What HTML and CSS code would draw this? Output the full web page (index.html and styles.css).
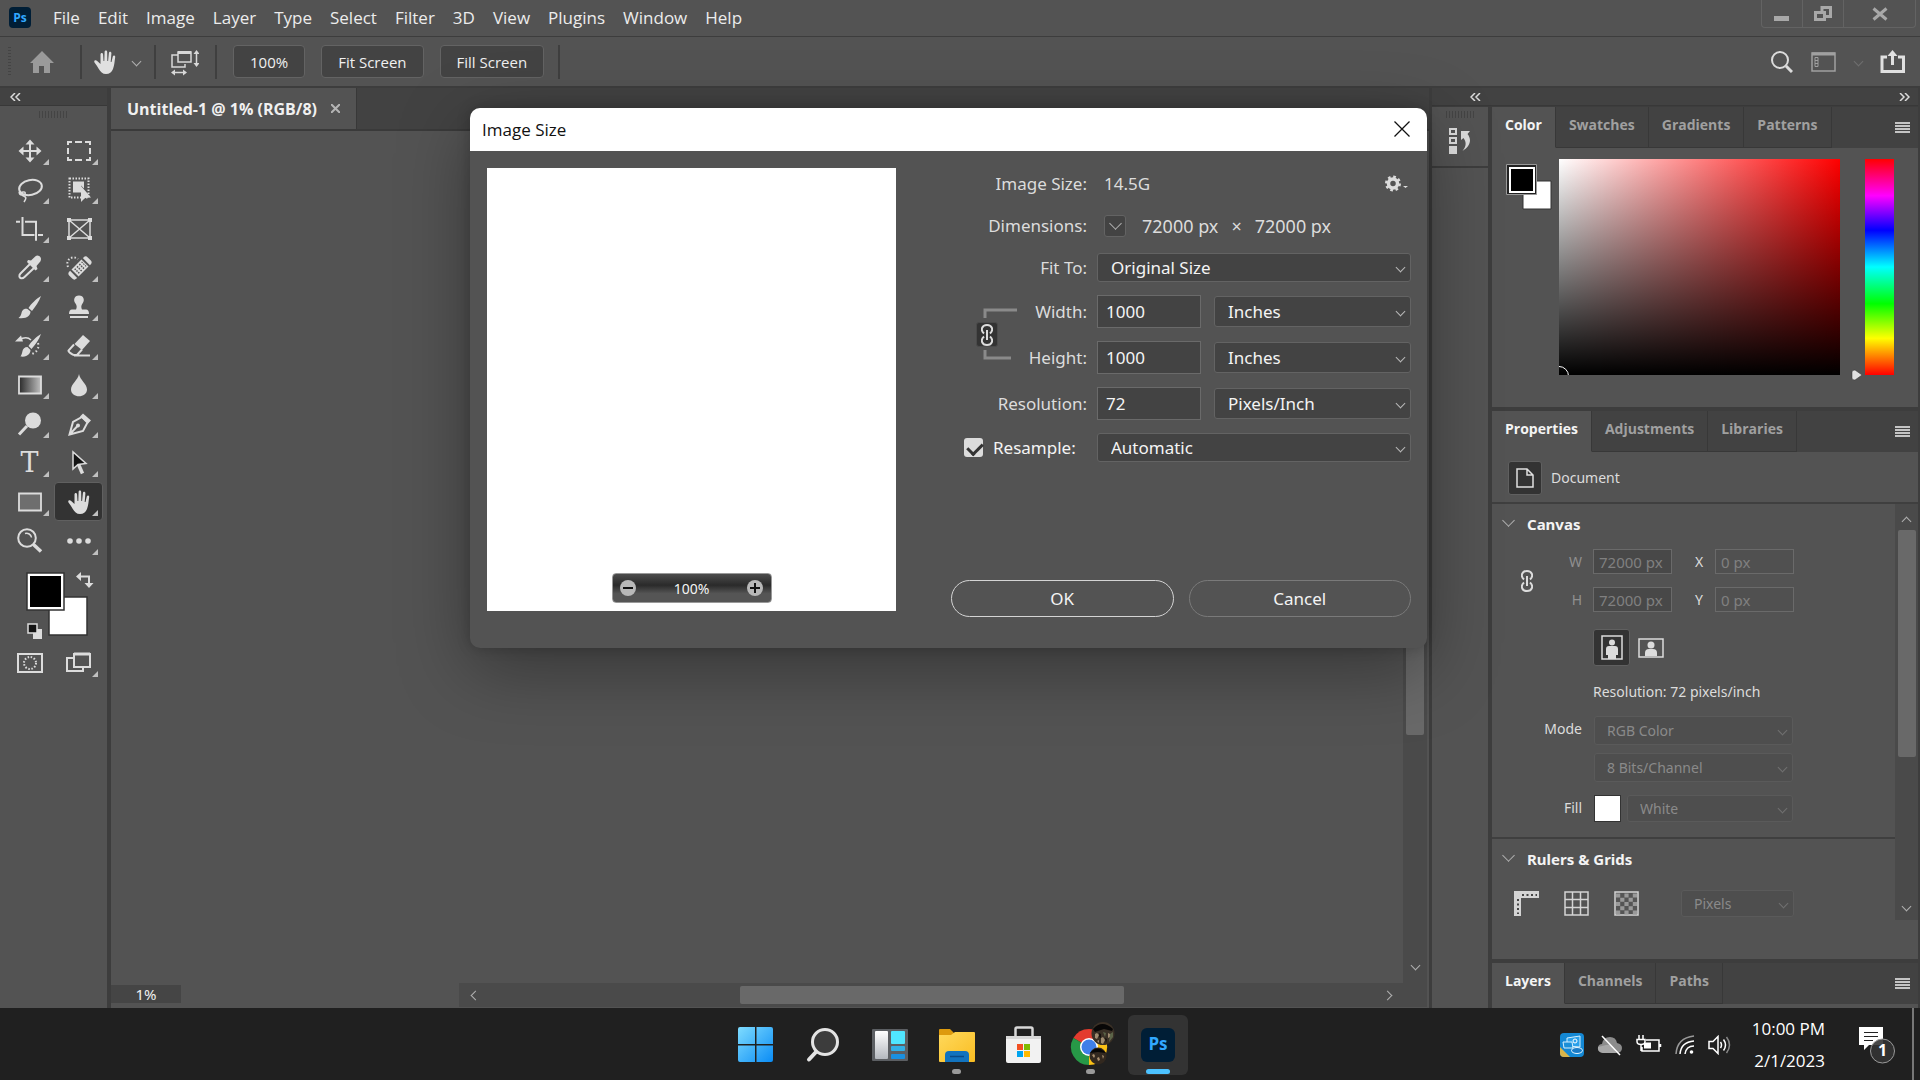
FILE: index.html
```html
<!DOCTYPE html>
<html lang="en">
<head>
    <meta charset="UTF-8">
    <meta name="viewport" content="width=device-width, initial-scale=1.0">
    <title>Untitled-1 @ 1% (RGB/8)</title>
    <link rel="stylesheet" href="styles.css">
</head>
<body>
    <!-- Menu bar -->
    <header class="menubar">
        <svg class="app-logo" width="22" height="21" viewBox="0 0 22 21"><rect width="22" height="21" rx="4" fill="#001e36"/><text x="11" y="15" text-anchor="middle" class="ps-small">Ps</text></svg>
        <nav class="menus">
            <button>File</button>
            <button>Edit</button>
            <button>Image</button>
            <button>Layer</button>
            <button>Type</button>
            <button>Select</button>
            <button>Filter</button>
            <button>3D</button>
            <button>View</button>
            <button>Plugins</button>
            <button>Window</button>
            <button>Help</button>
        </nav>
        <div class="window-buttons">
            <button aria-label="Minimize"><svg width="16" height="16"><path d="M0 10h15v5H0z" fill="#a8a8a8"/></svg></button>
            <button aria-label="Restore"><svg width="18" height="16" fill="none" stroke="#a8a8a8" stroke-width="3"><path d="M1.500 6.500h9v7h-9zM8 5V1.500h8.500v9H12"/></svg></button>
            <button aria-label="Close" class="wide"><svg width="16" height="14" stroke="#a8a8a8" stroke-width="3"><path d="M1.500 1.500l13 11M14.500 1.500l-13 11"/></svg></button>
        </div>
    </header>

    <!-- Tool options -->
    <div class="options">
        <span class="grip-v"></span>
        <button class="home" aria-label="Home"><svg width="26" height="24" fill="#9a9a9a"><path d="M13 1L1 13h3v10h6v-7h5v7h6V13h4z"/></svg></button>
        <span class="sep"></span>
        <button class="hand" aria-label="Hand tool">
            <svg width="22" height="24" viewBox="0 0 22 24"><use href="#i-hand"/></svg>
            <i class="chev"></i>
        </button>
        <span class="sep"></span>
        <button class="resize" aria-label="Scroll all windows">
            <svg width="28" height="26" fill="none" stroke="#d8d8d8" stroke-width="1.500"><path d="M7 5H1v12h13v-3M7 2h13v10H7z"/><path d="M7 2.500h13" stroke-width="3"/><path d="M25.500 3v11M3 22.500h10"/><path d="M25.500 0l3 4h-6zM25.500 17l3-4h-6zM0 22.500l4-3v6zM16 22.500l-4-3v6z" fill="#d8d8d8" stroke="none"/></svg>
        </button>
        <span class="sep"></span>
        <div class="zoom-buttons">
            <button class="opt-btn">100%</button>
            <button class="opt-btn">Fit Screen</button>
            <button class="opt-btn">Fill Screen</button>
        </div>
        <span class="sep"></span>
        <div class="options-right">
            <button aria-label="Search"><svg width="22" height="22" fill="none" stroke="#dcdcdc"><circle cx="9" cy="9" r="8" stroke-width="2"/><path d="M15 15l6 6" stroke-width="3"/></svg></button>
            <button aria-label="Workspace"><svg width="26" height="20" fill="none" stroke="#a0a0a0"><path d="M1 1h23v18H1z" stroke-width="1.500"/><path d="M1 2h23" stroke-width="3"/><path d="M4 5.500h3v9H4zM4 8.500h3M4 11.500h3"/></svg></button>
            <i class="chev dim"></i>
            <button aria-label="Share"><svg width="26" height="24" fill="none" stroke="#e0e0e0" stroke-width="3"><path d="M7 7H2v14.500h21.500V7H18M12.500 15V5"/><path d="M12.500 0l5 6h-10z" fill="#e0e0e0" stroke="none"/></svg></button>
        </div>
    </div>

    <main class="workspace">
        <!-- Toolbox -->
        <aside class="toolbox">
            <div class="strip"><svg width="11" height="8" class="dbl"><path d="M5 0L1 4l4 4M10 0L6 4l4 4"/></svg></div>
            <span class="grip"></span>
            <div class="tools">
                <button class="tool more" aria-label="Move"><svg viewBox="0 0 28 28"><path d="M14 5v18M5 14h18" class="ln"/><path d="M14 2.500l4.500 5h-9zM14 25.500l4.500-5h-9zM2.500 14l5-4.500v9zM25.500 14l-5-4.500v9z"/></svg></button>
                <button class="tool more" aria-label="Marquee"><svg viewBox="0 0 28 28"><path d="M3 8V5h4M10 5h7M20 5h5v3M25 11v6M25 20v3h-4M17 23h-7M7 23H3v-3M3 17v-6" class="ln"/></svg></button>
                <button class="tool more" aria-label="Lasso"><svg viewBox="0 0 28 28"><g class="ln"><ellipse cx="14.500" cy="11.500" rx="11.500" ry="7.500" transform="rotate(-12 14.500 11.500)"/><path d="M4 15c-2 2 0 4.500 3 4 3-.5 3-3.500 0-3s-3 3 .5 4 2.500 3 .5 6" stroke-width="1.500"/></g></svg></button>
                <button class="tool more" aria-label="Object selection"><svg viewBox="0 0 28 28"><path d="M4.500 2.500h19v19h-19z" class="ln" stroke-dasharray="1.500 1.500"/><path d="M8 5.500h11v7l-3-3v7H8z"/><path d="M16 10v16l4-4 6-.5z"/></svg></button>
                <button class="tool more" aria-label="Crop"><svg viewBox="0 0 28 28"><path d="M6.500 2v18h12M0 6.700h4M9 6.700h11v19M22 20h5" class="ln"/></svg></button>
                <button class="tool" aria-label="Frame"><svg viewBox="0 0 28 28"><path d="M4 5h21v18H4zM4 5l21 18M25 5L4 23" class="ln" stroke-width="1.500"/><path d="M2 3h4v4H2zM23 3h4v4h-4zM2 21h4v4H2zM23 21h4v4h-4z"/></svg></button>
                <button class="tool more" aria-label="Eyedropper"><svg viewBox="0 0 28 28"><path d="M14 10L4.500 19.500c-2 2-1 4 0 4.500 1 .5 2.500.5 4-1L18 14" class="ln"/><path d="M12 6l3 .5 4.500-4.300c3-2 7 1.500 5 5L20.500 12l1 3-2 1.500L11 8z"/></svg></button>
                <button class="tool more" aria-label="Healing brush"><svg viewBox="0 0 28 28"><path d="M3 13C0 5 8 1 13 5" class="ln" stroke-dasharray="1.500 2"/><g transform="rotate(-45 15 14)"><path d="M6 9h-1a3 3 0 0 0-3 3v4a3 3 0 0 0 3 3h1zM24 9h1a3 3 0 0 1 3 3v4a3 3 0 0 1-3 3h-1z"/><path d="M8 9h14v10H8z"/><path d="M10 11.500h11M10 14h11M10 16.500h11" stroke="#535353" stroke-width="1.500" stroke-dasharray="1.500 1.800"/></g></svg></button>
                <button class="tool more" aria-label="Brush"><svg viewBox="0 0 28 28"><path d="M25 3c-5 3-10 8-12.500 12l3.500 3c3-4 7-9 9-15zM11.500 16c-4-1-5.500 2-6 4-.4 2-1.500 4-3 5 4 .6 8 0 10-2 1.500-1.500 2-3 2-4.500z"/></svg></button>
                <button class="tool more" aria-label="Clone stamp"><svg viewBox="0 0 28 28"><path d="M14 2.500c-5 0-6 5-3.500 8 1.500 2 1.500 4 .5 6H7c-2 0-3 1.500-3 4.500h20c0-3-1-4.500-3-4.500h-4c-1-2-1-4 .5-6 2.500-3 1.500-8-3.500-8zM5 23h18v2H5z"/></svg></button>
                <button class="tool more" aria-label="History brush"><svg viewBox="0 0 28 28"><path d="M25 2c-5 3-10 8-12.500 12l3 3C19 13 23 8 25 2zM11.500 15c-3 0-4.500 2-5 4-.4 2-1 4-2 5.500 4 .6 6.500-.5 8-2 1.500-1.500 2-3 2-4.500z"/><path d="M3 8c5-3 9-3 12 0" class="ln" stroke-width="1.500"/><path d="M-1 9.500l6-6 2 6z"/><path d="M22 11c1.500 5-1 9-6 11" class="ln" stroke-dasharray="1.500 2.500"/></svg></button>
                <button class="tool more" aria-label="Eraser"><svg viewBox="0 0 28 28"><path d="M18 3l7 6-8 9-7.500-6z"/><path d="M9 12.500l-5.500 6c-.6 1 4 4.500 5.500 4.500h3l5-5.500M9 23.500h16" class="ln"/></svg></button>
                <button class="tool more" aria-label="Gradient"><svg viewBox="0 0 28 28"><defs><linearGradient id="grad"><stop offset="0" stop-color="#2a2a2a"/><stop offset="1" stop-color="#c0c0c0"/></linearGradient></defs><path d="M3 5.500h22v17H3z" fill="url(#grad)" stroke="#dcdcdc" stroke-width="1.800"/></svg></button>
                <button class="tool more" aria-label="Blur"><svg viewBox="0 0 28 28"><path d="M14 3c1 6 8 10 8 15.500 0 9-16 9-16 0C6 13 13 9 14 3z"/></svg></button>
                <button class="tool more" aria-label="Dodge"><svg viewBox="0 0 28 28"><circle cx="17" cy="10.500" r="8"/><path d="M11 16l-8 8.500" class="ln" stroke-width="3"/></svg></button>
                <button class="tool more" aria-label="Pen"><svg viewBox="0 0 28 28"><path d="M4.500 24.500L8 12l9-5 5.500 5.500L18 21zM4.500 24.500l8-8.500" class="ln"/><circle cx="13" cy="15.500" r="2"/><path d="M18 3.500l8 7-3 3-8-7z"/></svg></button>
                <button class="tool more" aria-label="Type"><span class="type-glyph">T</span></button>
                <button class="tool more" aria-label="Path selection"><svg viewBox="0 0 28 28"><path d="M8 3v17l5-4.500 8-1z" fill="#141414" stroke="#dcdcdc" stroke-width="1.500"/><path d="M13.500 15.500l4 9" class="ln" stroke-width="3.500"/></svg></button>
                <button class="tool more" aria-label="Rectangle"><svg viewBox="0 0 28 28"><path d="M3 5.500h22v17H3z" fill="#6e6e6e" stroke="#dcdcdc" stroke-width="1.800"/></svg></button>
                <button class="tool more active" aria-label="Hand"><svg viewBox="0 0 28 28"><g transform="translate(3 2)"><path id="i-hand" d="M6.500 14V4.500c0-2 2.500-2 2.600 0L9.500 11h.8L10.600 2c.1-1.900 2.500-1.900 2.600 0l.1 9h.8l.8-8c.2-1.800 2.500-1.700 2.500.2L16.700 12h.8l1.300-5.500c.5-1.800 2.600-1.300 2.400.6C20.500 12 20.500 15 19 19c-1.500 3.500-3.500 5-7 5s-5.500-2-7.500-5.500C3 16 2 14.500.5 12.500c-1-1.800 1-3 2.700-1.600z"/></g></svg></button>
                <button class="tool" aria-label="Zoom"><svg viewBox="0 0 28 28"><circle cx="11" cy="11" r="8.800" class="ln"/><path d="M9 6.500c3-1 6 1 6.500 4" class="ln" stroke-width="1.500"/><path d="M17.500 17.500l7.500 7" class="ln" stroke-width="3.500"/></svg></button>
                <button class="tool more" aria-label="Edit toolbar"><svg viewBox="0 0 28 28"><circle cx="5" cy="14" r="2.800"/><circle cx="14" cy="14" r="2.800"/><circle cx="23" cy="14" r="2.800"/></svg></button>
            </div>
            <button class="swatches" aria-label="Foreground and background colors">
                <svg width="68" height="70" viewBox="0 0 68 70">
                    <path d="M23 25h38v38H23z" fill="#fff" stroke="#333" stroke-width="1.500"/>
                    <path d="M1 1h37v37H1z" fill="#fff" stroke="#333" stroke-width="1.500"/>
                    <path d="M4 4h31v31H4z" fill="#000"/>
                    <path d="M54 4.500h9V12" fill="none" stroke="#dcdcdc" stroke-width="2"/>
                    <path d="M50 4.500l5-4.500v9zM63 16l-4.500-5h9z" fill="#dcdcdc"/>
                    <path d="M7 57h9v10H7z" fill="#dcdcdc"/>
                    <path d="M2 52h9v9H2z" fill="#141414" stroke="#dcdcdc" stroke-width="1.500"/>
                </svg>
            </button>
            <div class="tools modes">
                <button class="tool" aria-label="Quick mask"><svg viewBox="0 0 28 28"><path d="M2 5h24v18H2z" class="ln"/><circle cx="14" cy="14" r="6" class="ln" stroke-dasharray="1.500 1.640"/></svg></button>
                <button class="tool more" aria-label="Screen mode"><svg viewBox="0 0 28 28"><path d="M8 9H2v13h16v-4" class="ln"/><path d="M9 5h16v13H9z" class="ln"/><path d="M9 5h16" class="ln" stroke-width="3"/></svg></button>
            </div>
        </aside>

        <!-- Document window -->
        <section class="document">
            <div class="doc-tabs">
                <div class="doc-tab">
                    <span>Untitled-1 @ 1% (RGB/8)</span>
                    <button aria-label="Close document"><svg width="9" height="9" stroke="#b4b4b4" stroke-width="2"><path d="M0 0l9 9M9 0L0 9"/></svg></button>
                </div>
            </div>
            <div class="canvas-area">
                <div class="canvas"></div>
                <div class="vscroll"><span class="thumb"></span><i class="chev"></i></div>
            </div>
            <div class="statusbar">
                <input class="zoom-field" type="text" value="1%" aria-label="Zoom level">
                <div class="hscroll"><i class="chev left"></i><span class="thumb"></span><i class="chev right"></i></div>
            </div>
        </section>

        <!-- Panels -->
        <div class="docks">
            <div class="strip"><svg width="11" height="8" class="dbl"><path d="M5 0L1 4l4 4M10 0L6 4l4 4"/></svg><svg width="11" height="8" class="dbl"><path d="M1 0l4 4-4 4M6 0l4 4-4 4"/></svg></div>
            <div class="dock-row">
                <aside class="icon-dock">
                    <span class="grip"></span>
                    <button aria-label="History"><svg width="24" height="28" fill="none" stroke="#dcdcdc" stroke-width="2"><path d="M2 2h6v5H2zM2 11h6v5H2z"/><path d="M1 19h8v8H1z" fill="#dcdcdc" stroke="none"/><path d="M13 4h9l-2.500 3c5 6 2 13-5 17 4-5 4-9 1-13l-2.500 2z" fill="#dcdcdc" stroke="none"/></svg></button>
                </aside>
                <aside class="panels">
                    <section class="panel">
                        <div class="tabs">
                            <button class="tab on">Color</button>
                            <button class="tab">Swatches</button>
                            <button class="tab">Gradients</button>
                            <button class="tab">Patterns</button>
                            <button class="burger" aria-label="Panel menu"></button>
                        </div>
                        <div class="color-body">
                            <svg width="46" height="47" viewBox="0 0 46 47"><path d="M17 17h28v28H17z" fill="#fff" stroke="#333"/><path d="M.5.5h30v30H.5z" fill="#222" stroke="#999"/><path d="M3 3h26v26H3z" fill="#fff"/><path d="M5 5h22v22H5z" fill="#000"/></svg>
                            <div class="color-field"><span class="picker"></span></div>
                            <div class="hue"><svg class="hue-mark" width="12" height="12"><path d="M1 3q0-2 3-2l7 5-7 5q-3 0-3-2z" fill="#e0e0e0" stroke="#333" stroke-width=".5"/></svg></div>
                        </div>
                    </section>

                    <section class="panel props">
                        <div class="tabs">
                            <button class="tab on">Properties</button>
                            <button class="tab">Adjustments</button>
                            <button class="tab">Libraries</button>
                            <button class="burger" aria-label="Panel menu"></button>
                        </div>
                        <div class="doc-row">
                            <span class="pressed"><svg width="18" height="20" fill="none" stroke="#e0e0e0" stroke-width="1.500"><path d="M1 1h10l6 6v12H1zM11 1v6h6"/></svg></span>
                            Document
                        </div>
                        <div class="props-scroll">
                            <div class="props-body">
                                <h2><i class="chev big"></i>Canvas</h2>
                                <div class="fields">
                                    <svg class="chain" width="12" height="22" viewBox="0 0 12 22"><use href="#i-chain"/></svg>
                                    <label class="off" for="cw">W</label>
                                    <div class="pair"><input id="cw" type="text" value="72000 px" disabled><label for="cx">X</label><input id="cx" class="flat" type="text" value="0 px" disabled></div>
                                    <label class="off" for="ch">H</label>
                                    <div class="pair"><input id="ch" type="text" value="72000 px" disabled><label for="cy">Y</label><input id="cy" class="flat" type="text" value="0 px" disabled></div>
                                </div>
                                <div class="orient">
                                    <button class="pressed" aria-label="Portrait"><svg width="22" height="26" fill="#dcdcdc"><path d="M1 1h20v23H1z" fill="none" stroke="#dcdcdc" stroke-width="1.500"/><circle cx="11" cy="7.500" r="3"/><path d="M5 14q0-3 3-3h6q3 0 3 3v6h-2v4H7v-4H5z"/></svg></button>
                                    <button aria-label="Landscape"><svg width="26" height="20" fill="#dcdcdc"><path d="M1 1h24v18H1z" fill="none" stroke="#dcdcdc" stroke-width="1.500"/><circle cx="13" cy="7" r="3.500"/><path d="M7 18v-3q0-4 4-4h4q4 0 4 4v3z"/></svg></button>
                                </div>
                                <p class="res">Resolution: 72 pixels/inch</p>
                                <div class="modes-grid">
                                    <label for="mode">Mode</label>
                                    <span class="select off"><select id="mode" disabled><option>RGB Color</option></select></span>
                                    <span class="select off second"><select aria-label="Bit depth" disabled><option>8 Bits/Channel</option></select></span>
                                    <label for="fill">Fill</label>
                                    <div class="fill-row"><span class="fill-color"></span><span class="select off"><select id="fill" disabled><option>White</option></select></span></div>
                                </div>
                                <div class="rulers">
                                    <h2><i class="chev big"></i>Rulers &amp; Grids</h2>
                                    <div class="ruler-row">
                                        <button aria-label="Rulers"><svg width="25" height="25"><path d="M0 0h25v7H7v18H0z" fill="#d4d4d4"/><path d="M8 4h15M4 8v15" stroke="#444" stroke-width="2" stroke-dasharray="2 2.500"/></svg></button>
                                        <button aria-label="Grid"><svg width="25" height="25" fill="none" stroke="#d4d4d4" stroke-width="1.500"><path d="M1 1h23v23H1zM1 8.500h23M1 16.500h23M8.500 1v23M16.500 1v23"/></svg></button>
                                        <button aria-label="Transparency"><svg width="25" height="25"><path d="M1 1h23v23H1z" fill="#555" stroke="#d4d4d4" stroke-width="1.500"/><path d="M2 4.500h21M2 13h21M2 21.500h21" stroke="#999" stroke-width="4" stroke-dasharray="4.200 4.200"/><path d="M6.200 8.800h17M6.200 17.200h17" stroke="#999" stroke-width="4" stroke-dasharray="4.200 4.200"/></svg></button>
                                        <span class="select off"><select aria-label="Ruler units" disabled><option>Pixels</option></select></span>
                                    </div>
                                </div>
                            </div>
                            <div class="pscroll"><i class="chev up"></i><span class="thumb"></span><i class="chev"></i></div>
                        </div>
                    </section>

                    <section class="panel collapsed">
                        <div class="tabs">
                            <button class="tab on">Layers</button>
                            <button class="tab">Channels</button>
                            <button class="tab">Paths</button>
                            <button class="burger" aria-label="Panel menu"></button>
                        </div>
                    </section>
                </aside>
            </div>
        </div>
    </main>

    <!-- Image Size dialog -->
    <form class="dialog" role="dialog" aria-labelledby="dlg-title">
        <div class="dlg-title">
            <span id="dlg-title">Image Size</span>
            <button type="button" aria-label="Close"><svg width="16" height="16" stroke="#111" stroke-width="1.300"><path d="M.5.5l15 15M15.500.5l-15 15"/></svg></button>
        </div>
        <div class="dlg-body">
            <div class="preview">
                <div class="preview-zoom">
                    <button type="button" aria-label="Zoom out"><svg width="16" height="16"><circle cx="8" cy="8" r="8" fill="#b8b8b8"/><path d="M3 8h10" stroke="#111" stroke-width="2"/></svg></button>
                    <span>100%</span>
                    <button type="button" aria-label="Zoom in"><svg width="16" height="16"><circle cx="8" cy="8" r="8" fill="#b8b8b8"/><path d="M3 8h10M8 3v10" stroke="#111" stroke-width="2"/></svg></button>
                </div>
            </div>
            <div class="settings">
                <div class="row info">
                    <span class="lbl">Image Size:</span>
                    <span class="val">14.5G</span>
                    <button type="button" class="gear" aria-label="Settings"><svg width="26" height="18" viewBox="0 0 26 18"><circle cx="8" cy="8.500" r="4.500" fill="none" stroke="#dcdcdc" stroke-width="3.500"/><circle cx="8" cy="8.500" r="6.800" fill="none" stroke="#dcdcdc" stroke-width="2.400" stroke-dasharray="2.670 2.670"/><path d="M18 11h5l-2.500 2z" fill="#dcdcdc"/></svg></button>
                </div>
                <div class="row info">
                    <span class="lbl">Dimensions:</span>
                    <button type="button" class="dim-btn" aria-label="Dimension units"><i class="chev big"></i></button>
                    <span class="dims"><span>72000 px</span><span>×</span><span>72000 px</span></span>
                </div>
                <div class="row fit">
                    <label class="lbl" for="fit">Fit To:</label>
                    <span class="select"><select id="fit"><option>Original Size</option></select></span>
                </div>
                <div class="linked">
                    <svg class="link-lines" width="42" height="54" viewBox="0 0 42 54" fill="none" stroke="#8a8a8a" stroke-width="3"><path d="M9 10V2h32M9 42v8h26"/></svg>
                    <button type="button" class="link-btn" aria-label="Constrain aspect ratio"><svg width="12" height="22" viewBox="0 0 12 22"><g id="i-chain" fill="none" stroke="#dcdcdc" stroke-width="2"><path d="M3 9.500C-1 6 1 1 6 1s7 5 3 8.500M3 12.500C-1 16 1 21 6 21s7-5 3-8.500M6 6v10"/></g></svg></button>
                    <div class="row">
                        <label class="lbl" for="w">Width:</label>
                        <input id="w" type="text" value="1000">
                        <span class="select"><select aria-label="Width units"><option>Inches</option></select></span>
                    </div>
                    <div class="row">
                        <label class="lbl" for="h">Height:</label>
                        <input id="h" type="text" value="1000">
                        <span class="select"><select aria-label="Height units"><option>Inches</option></select></span>
                    </div>
                </div>
                <div class="row">
                    <label class="lbl" for="r">Resolution:</label>
                    <input id="r" type="text" value="72">
                    <span class="select"><select aria-label="Resolution units"><option>Pixels/Inch</option></select></span>
                </div>
                <div class="row fit">
                    <label class="lbl check"><input type="checkbox" checked>Resample:</label>
                    <span class="select"><select aria-label="Resample method"><option>Automatic</option></select></span>
                </div>
                <div class="actions">
                    <button type="button" class="pill ok">OK</button>
                    <button type="button" class="pill">Cancel</button>
                </div>
            </div>
        </div>
    </form>

    <!-- Taskbar -->
    <footer class="taskbar">
        <div class="apps">
            <button aria-label="Start"><svg width="36" height="36"><defs><linearGradient id="win" x1="0" y1="0" x2="1" y2="1"><stop offset="0" stop-color="#7fdcff"/><stop offset="1" stop-color="#0a8cf5"/></linearGradient></defs><path d="M2 0h15v17H0V2q0-2 2-2zM18.500 0H33q2 0 2 2v15H18.500zM0 18.500h17V35H2q-2 0-2-2zM18.500 18.500H35V33q0 2-2 2H18.500z" fill="url(#win)"/></svg></button>
            <button aria-label="Search"><svg width="34" height="36" fill="none" stroke="#e4e4e4"><path d="M10 25l-7 7.500" stroke-width="4" stroke-linecap="round"/><circle cx="19" cy="15" r="12.500" fill="#3c3c3c" stroke-width="3"/></svg></button>
            <button aria-label="Widgets"><svg width="36" height="34"><defs><linearGradient id="wd" x1="0" y1="0" x2="0" y2="1"><stop offset="0" stop-color="#fff"/><stop offset="1" stop-color="#b4b8be"/></linearGradient></defs><rect y="1" width="36" height="32" rx="1" fill="#5c5f63"/><rect x="3" y="3" width="13" height="28" rx="1" fill="url(#wd)"/><rect x="19" y="3" width="14" height="13" rx="1" fill="#50e6ff"/><rect x="19" y="18" width="14" height="5" rx="1" fill="#32b0e6"/><rect x="19" y="26" width="14" height="5" rx="1" fill="#1a90e0"/></svg></button>
            <button aria-label="File Explorer" class="running"><svg width="38" height="36"><defs><linearGradient id="fe" x1="0" y1="0" x2="1" y2="1"><stop offset="0" stop-color="#ffd95c"/><stop offset="1" stop-color="#f9bd22"/></linearGradient></defs><path d="M1 3q0-1 1-1h10l4 4v6H1z" fill="#dd9a0e"/><path d="M1 8h12l4-3h19q1 0 1 1v28q0 1-1 1H2q-1 0-1-1z" fill="url(#fe)"/><path d="M7 35V28q0-4 4-4h16q4 0 4 4v7z" fill="#1273be"/><path d="M12 29.500h14" stroke="#0b4a85" stroke-width="1.500"/></svg></button>
            <button aria-label="Microsoft Store"><svg width="36" height="38"><path d="M0 10h35v25q0 2-2 2H2q-2 0-2-2z" fill="#f2f2f2"/><path d="M0 10h35v3H0z" fill="#d8d8d8"/><path d="M9.500 13V3q0-1.500 1.500-1.500h14q1.500 0 1.500 1.500v10" fill="none" stroke="#d8d8d8" stroke-width="2.500"/><path d="M11 18h6v6h-6z" fill="#f25022"/><path d="M18 18h6v6h-6z" fill="#7fba00"/><path d="M11 25h6v6h-6z" fill="#00a4ef"/><path d="M18 25h6v6h-6z" fill="#ffb900"/></svg></button>
            <button aria-label="Chrome" class="running chrome"><svg width="46" height="44" viewBox="0 0 46 44">
                <path d="M19 26L3.400 17A18 18 0 0 1 34.600 17z" fill="#e33b2e"/><path d="M19 26l15.600-9A18 18 0 0 1 19 44z" fill="#fbc116"/><path d="M19 26v18A18 18 0 0 1 3.400 17z" fill="#279847"/>
                <circle cx="19" cy="26" r="9" fill="#fff"/><circle cx="19" cy="26" r="7.500" fill="#3f7fe8"/>
                <circle cx="33" cy="12.500" r="11.500" fill="#3a3026"/><path d="M23 8q9-10 20 0l-1 2-8-2-9 3z" fill="#080707"/><path d="M25 13l2-1 2 2-2 4-2-1zM38 12l2 1v3l-2 1zM31 17l2-1 2 3-2 4-2-1zM27 20l2-1v3z" fill="#a08c70"/><path d="M40 13l3-2v5l-4 5zM33 11l3 1-1 4z" fill="#5c6448"/><path d="M29 12l2 1v4l-2-1zM35 17l2 1-1 4z" fill="#15100c"/>
                <circle cx="28" cy="35" r="8.500" fill="#32281f"/><path d="M20 32q7-9 16 0l-8-1z" fill="#060606"/><path d="M22 34l2-1 1 2-1 2zM27 37l2-1 1 3-2 1zM32 34l2 1-1 3z" fill="#ab9070"/></svg></button>
            <button aria-label="Photoshop" class="current"><svg width="34" height="34"><rect width="34" height="34" rx="6" fill="#001e36"/><text x="17" y="22" text-anchor="middle" class="ps-big">Ps</text></svg></button>
        </div>
        <div class="tray">
            <svg width="24" height="24" viewBox="0 0 24 24"><rect width="24" height="24" rx="4" fill="#1488d4"/><path d="M0 14l10 10H4q-4 0-4-4z" fill="#d8b44a"/><path d="M7 5l13-2v11L7 13z" fill="#2aa0ea" stroke="#d4f0ff"/><path d="M3 9h9l1 6H4z" fill="#1b8fd8" stroke="#d4f0ff"/><circle cx="15" cy="8" r="2" fill="none" stroke="#fff"/><ellipse cx="17" cy="17.500" rx="5.500" ry="3" fill="#1a7cc8" stroke="#e8f8ff"/></svg>
            <svg width="26" height="22" viewBox="0 0 26 22"><path d="M6 19q-6-1-5-6 1-3 4-3 1-7 8-7 6 0 7 6 5 1 5 5 0 5-6 5z" fill="#8c8c8c"/><path d="M9 11q7-2 10 8H6q-6-1-5-6z" fill="#a8a8a8"/><path d="M5 2l18 19" stroke="#fff" stroke-width="1.500"/></svg>
            <svg width="26" height="20" viewBox="0 0 26 20" fill="none" stroke="#fff" stroke-width="1.500"><path d="M6 12v4h17V5H10M24.500 9v3M3 0v4M7 0v4M1 4.500h8v2q0 3-4 3t-4-3zM5 9v7"/><path d="M8 7.500h7v6H8z" fill="#fff" stroke="none"/></svg>
            <svg width="20" height="20" viewBox="0 0 20 20" fill="none" stroke="#fff" stroke-width="1.500"><path d="M1 19Q2 3 19 1" stroke="#999"/><path d="M5 19Q6 7 19 6M10 19q1-8 9-8"/><circle cx="16.500" cy="17" r="1.800" fill="#fff" stroke="none"/></svg>
            <svg width="24" height="20" viewBox="0 0 24 20" fill="none" stroke="#fff" stroke-width="1.500"><path d="M1 6.500h4l5-5v17l-5-5H1zM12.500 7q2 3 0 6M15.500 4.500q4 5.500 0 11"/><path d="M18.500 2q6 8 0 16" stroke="#888"/></svg>
            <div class="clock"><span>10:00 PM</span><span>2/1/2023</span></div>
            <button class="notify" aria-label="1 notification"><svg width="38" height="38"><path d="M1 1h24v18H11l-5 5v-5H1z" fill="#fff"/><path d="M6 6.500h14M6 10.500h14M6 14.500h9" stroke="#222" stroke-width="1.200"/><circle cx="24.500" cy="25" r="12" fill="#333" fill-opacity=".9" stroke="#999"/></svg><b>1</b></button>
        </div>
    </footer>
</body>
</html>
```
FILE: styles.css
```css
* {
    box-sizing: border-box;
}

body {
    margin: 0;
    height: 100vh;
    display: flex;
    flex-direction: column;
    overflow: hidden;
    position: relative;
    background-color: #535353;
    color: #dcdcdc;
    font-family: "Noto Sans", sans-serif;
    font-size: 14px;
}

button {
    background: none;
    border: none;
    padding: 0;
    margin: 0;
    color: inherit;
    font: inherit;
}

svg {
    display: block;
    flex-shrink: 0;
}

input,
select {
    font: inherit;
    color: inherit;
    margin: 0;
    padding: 0;
}

/* Chevrons and grips */
.chev {
    display: block;
    flex-shrink: 0;
    width: 7px;
    height: 7px;
    border-right: 1px solid #b0b0b0;
    border-bottom: 1px solid #b0b0b0;
    transform: rotate(45deg);
}

.chev.big {
    width: 9px;
    height: 9px;
}

.chev.dim { opacity: 0.3; }
.chev.up { transform: rotate(225deg); }
.chev.left { transform: rotate(135deg); }
.chev.right { transform: rotate(-45deg); }

.grip {
    display: block;
    width: 29px;
    height: 7px;
    background: repeating-linear-gradient(90deg, #444 0 1px, transparent 1px 3px);
}

.grip-v {
    width: 3px;
    height: 29px;
    background: repeating-linear-gradient(#444 0 1px, transparent 1px 3px);
}

.dbl {
    fill: none;
    stroke: #dcdcdc;
    stroke-width: 1.5;
}

/* Menu bar */
.menubar {
    display: flex;
    align-items: center;
    height: 37px;
    padding: 0 4px 1px 9px;
    border-bottom: 1px solid #3d3d3d;
}

.menus {
    display: flex;
    gap: 18px;
    margin-left: 22px;
    padding-bottom: 1px;
    font: 17px "Open Sans", sans-serif;
    color: #ececec;
}

.ps-small,
.ps-big {
    font: bold 12px "Open Sans", sans-serif;
    fill: #31a8ff;
}

.ps-big {
    font-size: 17px;
}

.window-buttons {
    display: flex;
    align-self: flex-start;
    margin-left: auto;
    height: 28px;
    border: 1px solid #636363;
    border-top: none;
    border-radius: 0 0 4px 4px;
}

.window-buttons button {
    width: 41px;
    display: flex;
    align-items: center;
    justify-content: center;
    border-right: 1px solid #636363;
}

.window-buttons .wide {
    width: 71px;
    border-right: none;
}

/* Options bar */
.options {
    display: flex;
    align-items: center;
    height: 51px;
    padding: 0 14px 0 8px;
    border-bottom: 2px solid #3d3d3d;
}

.options .sep {
    width: 2px;
    height: 34px;
    background-color: #3f3f3f;
}

.home {
    margin: 0 25px 0 18px;
}

.hand {
    display: flex;
    align-items: center;
    gap: 17px;
    padding: 0 14px 0 12px;
    fill: #e0e0e0;
}

.resize {
    padding: 2px 16px 0 15px;
}

.zoom-buttons {
    display: flex;
    gap: 16px;
    margin: 0 14px 0 16px;
}

.opt-btn {
    height: 33px;
    padding: 0 16px;
    border: 1px solid #636363;
    border-radius: 4px;
    background-color: #434343;
    color: #f0f0f0;
    font: 15px "Open Sans", sans-serif;
}

.options-right {
    display: flex;
    align-items: center;
    gap: 18px;
    margin-left: auto;
}

/* Workspace */
.workspace {
    flex: 1;
    min-height: 0;
    display: flex;
    background-color: #3d3d3d;
    gap: 3px;
}

.strip {
    display: flex;
    align-items: center;
    justify-content: space-between;
    height: 18px;
    padding: 0 10px;
    background-color: #424242;
    border-bottom: 1px solid #383838;
}

.toolbox {
    width: 108px;
    background-color: #535353;
    border-right: 1px solid #3d3d3d;
}

.toolbox .grip {
    margin: 5px 0 13px 39px;
}

.tools {
    display: grid;
    grid-template-columns: 49px 49px;
    grid-auto-rows: 39px;
    padding-left: 5px;
    fill: #dcdcdc;
}

.tool {
    position: relative;
    display: flex;
    align-items: center;
    justify-content: center;
    border: 1px solid transparent;
    border-radius: 4px;
}

.tool svg {
    width: 28px;
    height: 28px;
    overflow: visible;
}

.ln {
    fill: none;
    stroke: #dcdcdc;
}

.ln:not([stroke-width]) {
    stroke-width: 2;
}

.tool.more::after {
    content: "";
    position: absolute;
    right: 4px;
    bottom: 4px;
    border: 3px solid;
    border-color: transparent #c0c0c0 #c0c0c0 transparent;
}

.tool.active {
    background-color: #333;
    border-color: #606060;
}

.type-glyph {
    font: 27px/28px "DejaVu Serif", serif;
    color: #dcdcdc;
}

.swatches {
    display: block;
    margin: 12px 0 1px 26px;
}

/* Document */
.document {
    flex: 1;
    min-width: 0;
    display: flex;
    flex-direction: column;
    padding-right: 2px;
    background-color: #535353;
}

.doc-tabs {
    display: flex;
    height: 43px;
    margin-right: -2px;
    background-color: #424242;
    border-bottom: 2px solid #3a3a3a;
}

.doc-tab {
    display: flex;
    align-items: center;
    gap: 14px;
    padding: 0 16px;
    background-color: #535353;
    border-right: 1px solid #383838;
    font: bold 16px "Open Sans", sans-serif;
    color: #f0f0f0;
}

.canvas-area {
    flex: 1;
    display: flex;
}

.canvas {
    flex: 1;
}

.vscroll {
    width: 24px;
    background-color: #4a4a4a;
    display: flex;
    flex-direction: column;
    align-items: center;
    justify-content: space-between;
    padding: 300px 0 14px;
}

.thumb {
    display: block;
    background-color: #696969;
    border-radius: 2px;
}

.vscroll .thumb {
    width: 18px;
    height: 304px;
}

.statusbar {
    display: flex;
    align-items: flex-start;
    height: 25px;
}

.zoom-field {
    width: 70px;
    height: 18px;
    margin-top: 2px;
    border: none;
    background-color: #454545;
    text-align: center;
    color: #f0f0f0;
    font-size: 15px;
}

.hscroll {
    flex: 1;
    height: 24px;
    margin-left: 278px;
    display: flex;
    align-items: center;
    justify-content: space-between;
    padding: 0 36px 0 13px;
    background-color: #4a4a4a;
}

.hscroll .thumb {
    width: 384px;
    height: 18px;
}

/* Docks */
.docks {
    width: 488px;
    display: flex;
    flex-direction: column;
    border-right: 2px solid #3d3d3d;
}

.docks .strip {
    padding: 0 8px 0 38px;
}

.dock-row {
    flex: 1;
    display: flex;
    gap: 4px;
    padding-top: 1px;
}

.icon-dock {
    width: 56px;
    background: #535353;
}

.icon-dock .grip {
    margin: 4px 0 9px 14px;
}

.icon-dock button {
    width: 56px;
    padding: 0 0 11px 16px;
    border-bottom: 2px solid #3d3d3d;
}

.panels {
    flex: 1;
    display: flex;
    flex-direction: column;
    gap: 4px;
}

.panel {
    background-color: #535353;
}

.panel.collapsed {
    padding-bottom: 4px;
}

.tabs {
    display: flex;
    height: 41px;
    background-color: #424242;
    font: bold 14px "Open Sans", sans-serif;
}

.tab {
    padding: 0 13px 5px;
    border-right: 1px solid #383838;
    border-bottom: 1px solid #383838;
    color: #a0a0a0;
}

.tab.on {
    background-color: #535353;
    border-bottom-color: #535353;
    color: #f4f4f4;
}

.burger {
    width: 15px;
    height: 11px;
    margin: 15px 8px 0 auto;
    background: repeating-linear-gradient(#c4c4c4 0 2px, transparent 2px 3px);
}

/* Color panel */
.color-body {
    display: flex;
    padding: 11px 24px 32px 14px;
}

.color-body > svg {
    margin-top: 5px;
}

.color-field {
    position: relative;
    flex: 1;
    height: 216px;
    margin: 0 25px 0 7px;
    overflow: hidden;
    background: linear-gradient(transparent, #000), linear-gradient(90deg, #fff, #f00);
}

/* current colour sits in the bottom left corner */
.picker {
    position: absolute;
    left: -10px;
    bottom: -11px;
    width: 20px;
    height: 20px;
    border: 1px solid #fff;
    border-radius: 50%;
}

.hue {
    position: relative;
    width: 29px;
    background: linear-gradient(#f00, #f0f 17%, #00f 33%, #0ff 50%, #0f0 67%, #ff0 83%, #f00);
}

.hue-mark {
    position: absolute;
    left: -14px;
    bottom: -6px;
}

/* Properties panel */
.props {
    flex: 1;
    display: flex;
    flex-direction: column;
}

.doc-row {
    display: flex;
    align-items: center;
    gap: 9px;
    height: 52px;
    padding: 1px 0 0 16px;
    border-bottom: 2px solid #3f3f3f;
    font-size: 14px;
}

.pressed {
    display: flex;
    align-items: center;
    justify-content: center;
    width: 34px;
    height: 34px;
    border: 1px solid #606060;
    border-radius: 3px;
    background-color: #333;
}

.props-scroll {
    flex: 1;
    display: flex;
}

.props-body {
    flex: 1;
    padding-top: 9px;
}

h2 {
    display: flex;
    align-items: center;
    gap: 14px;
    height: 22px;
    margin: 0;
    padding-left: 12px;
    font-size: 15px;
    color: #f4f4f4;
}

h2 .chev {
    margin-bottom: 8px;
}

.fields {
    display: grid;
    grid-template-columns: 50px 40px 201px;
    grid-template-rows: 25px 25px;
    row-gap: 13px;
    align-items: center;
    margin-top: 14px;
}

.fields .chain {
    grid-row: 1 / 3;
    margin-left: 29px;
}

.fields > label {
    justify-self: end;
}

.fields > .off {
    color: #909090;
}

.fields input {
    width: 79px;
    height: 25px;
    padding-left: 5px;
    border: 1px solid #6a6a6a;
    background-color: #484848;
    color: #808080;
    font-size: 15px;
}

.fields .flat {
    background-color: #505050;
}

.pair {
    display: flex;
    align-items: center;
    justify-content: space-between;
    margin-left: 11px;
    width: 201px;
}

.pair label {
    margin-left: 11px;
}

.orient {
    display: flex;
    align-items: center;
    gap: 8px;
    margin: 17px 0 0 101px;
}

.orient .pressed {
    width: 37px;
    height: 37px;
}

.res {
    margin: 16px 0 14px 101px;
    line-height: 20px;
}

.modes-grid {
    display: grid;
    grid-template-columns: 90px 199px;
    column-gap: 12px;
    row-gap: 8px;
}

.modes-grid label {
    justify-self: end;
    line-height: 25px;
}

.modes-grid .second {
    grid-column: 2;
    margin-bottom: 5px;
}

.fill-row {
    display: flex;
    gap: 6px;
}

.fill-color {
    width: 27px;
    height: 27px;
    border: 1px solid #333;
    background-color: #fff;
}

.fill-row .select {
    flex: 1;
}

.rulers {
    margin-top: 15px;
    padding-top: 9px;
    border-top: 2px solid #3f3f3f;
}

.ruler-row {
    display: flex;
    align-items: center;
    gap: 25px;
    padding: 20px 0 0 22px;
}

.ruler-row .select {
    width: 113px;
    margin-left: 17px;
}

.pscroll {
    width: 23px;
    height: 416px;
    padding: 14px 2px 10px;
    display: flex;
    flex-direction: column;
    align-items: center;
    background-color: #4a4a4a;
}

.pscroll .thumb {
    width: 18px;
    height: 227px;
    margin: 5px 0 auto;
}

/* Drop-downs */
.select {
    position: relative;
    display: block;
}

.select select {
    display: block;
    width: 100%;
    height: 31px;
    padding-left: 13px;
    appearance: none;
    border: 1px solid #636363;
    border-radius: 3px;
    background-color: #434343;
    color: #f4f4f4;
    opacity: 1;
}

.select::after {
    content: "";
    position: absolute;
    right: 7px;
    top: calc(50% - 4px);
    width: 6px;
    height: 6px;
    border: solid #b8b8b8;
    border-width: 0 1px 1px 0;
    transform: rotate(45deg);
}

.select.off select {
    height: 29px;
    padding-left: 12px;
    border-color: #5a5a5a;
    background-color: #4e4e4e;
    color: #8a8a8a;
}

.select.off::after {
    border-color: #707070;
}

.fill-row .select select,
.ruler-row .select select {
    height: 27px;
}

/* Dialog */
.dialog {
    position: absolute;
    left: 470px;
    top: 108px;
    width: 957px;
    border-radius: 10px;
    background-color: #535353;
    box-shadow: 0 20px 70px rgba(0, 0, 0, 0.35), 0 0 14px rgba(0, 0, 0, 0.2);
    font-size: 17px;
}

.dlg-title {
    display: flex;
    align-items: center;
    justify-content: space-between;
    height: 43px;
    padding: 0 17px 1px 12px;
    border-radius: 10px 10px 0 0;
    background-color: #fff;
    color: #111;
    font: 17px "Open Sans", sans-serif;
}

.dlg-body {
    display: flex;
    padding: 17px 16px 37px 17px;
}

.preview {
    display: flex;
    align-items: flex-end;
    justify-content: center;
    width: 409px;
    height: 443px;
    margin-right: 55px;
    padding-bottom: 8px;
    background-color: #fff;
}

.preview-zoom {
    display: flex;
    align-items: center;
    justify-content: space-between;
    width: 160px;
    height: 30px;
    padding: 0 7px;
    border: 1px solid #999;
    border-radius: 4px;
    background: linear-gradient(#4c4c4c, #2a2a2a 40%, #555 70%);
    color: #f4f4f4;
    font-size: 14px;
}

.settings {
    flex: 1;
    display: flex;
    flex-direction: column;
    gap: 13px;
    padding-top: 1px;
}

.row {
    display: flex;
    align-items: center;
    height: 33px;
}

.row.info {
    height: 29px;
}

.row.fit {
    height: 29px;
}

.lbl {
    width: 136px;
    margin-right: 10px;
    text-align: right;
}

.val {
    margin-left: 7px;
}

.gear {
    margin-left: auto;
}

.dim-btn {
    display: flex;
    align-items: center;
    justify-content: center;
    width: 22px;
    height: 22px;
    margin: 0 16px 0 7px;
    padding-bottom: 5px;
    border: 1px solid #636363;
    border-radius: 3px;
    background-color: #434343;
}

.dims {
    display: flex;
    gap: 13px;
    font-size: 18px;
}

.row .select {
    flex: 1;
}

.row.fit select {
    height: 29px;
}

.row input[type="text"] {
    width: 104px;
    height: 33px;
    margin-right: 13px;
    padding-left: 8px;
    border: 1px solid #6a6a6a;
    background-color: #434343;
    color: #f4f4f4;
}

.linked {
    position: relative;
    display: flex;
    flex-direction: column;
    gap: 13px;
}

/* bracket that joins width and height */
.link-lines {
    position: absolute;
    left: 25px;
    top: 13px;
}

.link-btn {
    position: absolute;
    left: 25px;
    top: 27px;
    width: 22px;
    height: 25px;
    display: flex;
    align-items: center;
    justify-content: center;
    border: 1px solid #4a4a4a;
    border-radius: 3px;
    background-color: #333;
}

.check {
    display: flex;
    align-items: center;
    gap: 10px;
    padding-left: 13px;
    color: #f4f4f4;
}

.check input {
    appearance: none;
    width: 19px;
    height: 19px;
    border-radius: 3px;
    background-color: #dcdcdc;
    position: relative;
}

.row .check input:checked::after {
    content: "";
    position: absolute;
    left: 6px;
    top: 2px;
    width: 7px;
    height: 12px;
    border: solid #333;
    border-width: 0 3px 3px 0;
    transform: rotate(45deg);
}

.actions {
    display: flex;
    gap: 15px;
    margin-top: auto;
    margin-bottom: -6px;
}

.pill {
    flex: 1 1 0;
    height: 37px;
    border: 1px solid #7a7a7a;
    border-radius: 19px;
    color: #f4f4f4;
}

.pill.ok {
    border-color: #d4d4d4;
}

/* Taskbar */
.taskbar {
    display: grid;
    grid-template-columns: 1fr auto 1fr;
    align-items: center;
    height: 72px;
    margin-right: 6px;
    padding: 2px 0 0 2px;
    border-right: 2px solid #777;
    position: relative;
    box-shadow: 6px 0 #202020;
    background-color: #202020;
    font-family: "Open Sans", sans-serif;
}

.apps {
    grid-column: 2;
    display: flex;
    gap: 7px;
}

.apps button {
    position: relative;
    display: flex;
    align-items: center;
    justify-content: center;
    width: 60px;
    height: 60px;
    border-radius: 6px;
}

.apps .current {
    background-color: #333;
}

.apps .chrome {
    padding: 0 0 4px 4px;
}

.running::after,
.current::after {
    content: "";
    position: absolute;
    left: 25px;
    bottom: 1px;
    width: 9px;
    height: 5px;
    border-radius: 3px;
    background-color: #9a9a9a;
}

.current::after {
    left: 18px;
    width: 24px;
    background-color: #4cc2ff;
}

.tray {
    display: flex;
    align-items: center;
    justify-content: flex-end;
    gap: 13px;
    padding-right: 16px;
    color: #fff;
}

.clock {
    display: flex;
    flex-direction: column;
    align-items: flex-end;
    margin: 0 20px 0 7px;
    font-size: 17px;
    line-height: 32px;
}

.notify {
    position: relative;
    width: 38px;
}

/* count badge */
.notify b {
    position: absolute;
    left: 20px;
    top: 13px;
    font-size: 16px;
}
```
